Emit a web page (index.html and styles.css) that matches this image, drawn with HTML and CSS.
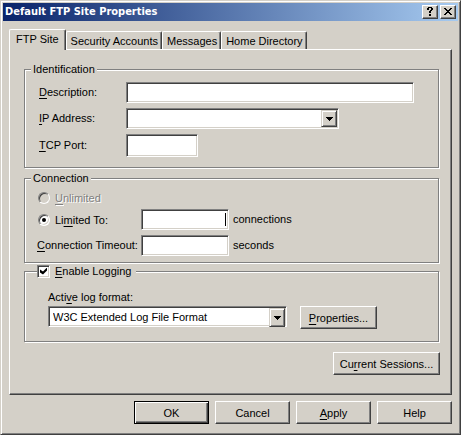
FILE: index.html
```html
<!DOCTYPE html>
<html lang="en">
<head>
<meta charset="utf-8">
<title>Default FTP Site Properties</title>
<link rel="stylesheet" href="styles.css">
</head>
<body>
<main class="window">
  <header class="titlebar">
    <h1 class="title">Default FTP Site Properties</h1>
    <button class="caption-button" type="button" aria-label="Help">
      <svg width="8" height="9" viewBox="0 0 8 9" shape-rendering="crispEdges" aria-hidden="true"><path d="M2 0h4v1H2zM1 1h2v2H1zM5 1h2v2H5zM4 3h2v1H4zM3 4h2v2H3zM3 7h2v2H3z"/></svg>
    </button>
    <button class="caption-button" type="button" aria-label="Close">
      <svg width="8" height="7" viewBox="0 0 8 7" shape-rendering="crispEdges" aria-hidden="true"><path d="M0 0h2v1H0zM6 0h2v1H6zM1 1h2v1H1zM5 1h2v1H5zM2 2h4v1H2zM3 3h2v1H3zM2 4h4v1H2zM1 5h2v1H1zM5 5h2v1H5zM0 6h2v1H0zM6 6h2v1H6z"/></svg>
    </button>
  </header>

  <form class="sheet">
    <div class="tabs" role="tablist">
      <button class="tab tab-active" type="button" role="tab" aria-selected="true">FTP Site</button>
      <button class="tab" type="button" role="tab">Security Accounts</button>
      <button class="tab" type="button" role="tab">Messages</button>
      <button class="tab" type="button" role="tab">Home Directory</button>
    </div>

    <section class="panel">
      <fieldset class="group identification">
        <legend class="caption">Identification</legend>
        <div class="id-rows">
          <label class="row-text" for="description"><u>D</u>escription:</label>
          <input class="field" id="description" type="text">
          <label class="row-text" for="ip"><u>I</u>P Address:</label>
          <span class="combo ip-combo">
            <select class="field" id="ip"><option></option></select>
            <span class="drop"><svg width="7" height="4" viewBox="0 0 7 4" shape-rendering="crispEdges" aria-hidden="true"><path d="M0 0h7v1H0zM1 1h5v1H1zM2 2h3v1H2zM3 3h1v1H3z"/></svg></span>
          </span>
          <label class="row-text" for="port"><u>T</u>CP Port:</label>
          <input class="field port" id="port" type="text">
        </div>
      </fieldset>

      <fieldset class="group connection">
        <legend class="caption">Connection</legend>
        <div class="limit-rows">
          <label class="choice choice-disabled"><input class="radio" type="radio" name="limit" disabled><span><u>U</u>nlimited</span></label>
          <label class="choice"><input class="radio" type="radio" name="limit" checked><span>Li<u>m</u>ited To:</span></label>
          <span class="field caret-field"><input class="bare" id="limit" type="text" aria-label="Maximum connections"><i class="caret"></i></span>
          <span class="row-text">connections</span>
          <label class="row-text" for="timeout"><u>C</u>onnection Timeout:</label>
          <input class="field" id="timeout" type="text">
          <span class="row-text">seconds</span>
        </div>
      </fieldset>

      <fieldset class="group logging">
        <legend class="check-caption">
          <label class="choice"><input class="checkbox" type="checkbox" checked><span><u>E</u>nable Logging</span></label>
        </legend>
        <div class="log-body">
          <label for="format">Acti<u>v</u>e log format:</label>
          <div class="log-row">
            <span class="combo log-combo">
              <select class="field" id="format"><option>W3C Extended Log File Format</option></select>
              <span class="drop"><svg width="7" height="4" viewBox="0 0 7 4" shape-rendering="crispEdges" aria-hidden="true"><path d="M0 0h7v1H0zM1 1h5v1H1zM2 2h3v1H2zM3 3h1v1H3z"/></svg></span>
            </span>
            <button class="button properties" type="button"><u>P</u>roperties...</button>
          </div>
        </div>
      </fieldset>

      <button class="button sessions" type="button">Cu<u>r</u>rent Sessions...</button>
    </section>

    <footer class="actions">
      <button class="button button-default" type="button">OK</button>
      <button class="button" type="button">Cancel</button>
      <button class="button" type="button"><u>A</u>pply</button>
      <button class="button" type="button">Help</button>
    </footer>
  </form>
</main>
</body>
</html>
```
FILE: styles.css
```css
:root {
  --face: #d4d0c8;
  --light: #ffffff;
  --shade: #808080;
  --dark: #404040;
}

* {
  box-sizing: border-box;
}

body {
  margin: 0;
  background: var(--face);
  color: #000;
  font: 11px/14px "Liberation Sans", Arial, sans-serif;
}

button,
input,
select {
  margin: 0;
  border-radius: 0;
  color: inherit;
  font: inherit;
}

u {
  text-underline-offset: 2px;
  text-decoration-thickness: 1px;
  text-decoration-skip-ink: none;
}

.window {
  display: flex;
  flex-direction: column;
  min-height: 100vh;
  padding: 2px;
  border: 1px solid var(--dark);
  border-top-color: var(--face);
  border-left-color: var(--face);
  box-shadow: inset 1px 1px var(--light), inset -1px -1px var(--shade);
}

.titlebar {
  display: flex;
  align-items: center;
  gap: 2px;
  height: 18px;
  padding: 0 2px;
  background: linear-gradient(to right, #0a246a, #a6caf0);
}

.title {
  flex: 1;
  margin: 0;
  color: #fff;
  font: bold 11px/14px "DejaVu Sans Condensed", "DejaVu Sans", sans-serif;
}

.caption-button {
  display: flex;
  align-items: center;
  justify-content: center;
  width: 16px;
  height: 14px;
  padding: 0 1px 1px 0;
  border: 1px solid var(--dark);
  border-top-color: var(--light);
  border-left-color: var(--light);
  background: var(--face);
  box-shadow: inset -1px -1px var(--shade);
}

.sheet {
  display: flex;
  flex: 1;
  flex-direction: column;
  padding: 8px 6px;
}

.tabs {
  display: flex;
  align-items: flex-end;
  height: 20px;
}

.tab {
  height: 18px;
  padding: 0 3px 0 4px;
  border: 1px solid var(--dark);
  border-width: 1px 1px 0;
  border-top-color: var(--light);
  border-left-color: var(--light);
  border-radius: 2px 2px 0 0;
  background: var(--face);
  box-shadow: inset -1px 0 var(--shade);
}

.tab-active {
  z-index: 1;
  height: 21px;
  margin-bottom: -1px;
  padding: 0 6px 2px;
}

.panel {
  display: flex;
  flex: 1;
  flex-direction: column;
  padding: 12px 11px 12px 14px;
  border: 1px solid var(--dark);
  border-top-color: var(--light);
  border-left-color: var(--light);
  box-shadow: inset -1px -1px var(--shade);
}

.group {
  min-width: 0;
  margin: 0 1px 0 0;
  padding: 0 12px;
  border: 1px solid var(--shade);
  box-shadow: 1px 1px var(--light), inset 1px 1px var(--light);
}

.caption {
  margin-left: -6px;
  padding: 0 2px;
  background: var(--face);
}

.identification {
  padding: 0 24px 10px 14px;
}

.identification .caption {
  margin-left: -8px;
}

.id-rows {
  display: grid;
  grid-template-columns: 87px 1fr;
  row-gap: 5px;
  align-items: center;
  padding-top: 6px;
}

.row-text {
  padding-bottom: 2px;
  white-space: nowrap;
}

.field {
  display: block;
  width: 100%;
  height: 21px;
  padding: 0 4px;
  border: 1px solid var(--light);
  border-top-color: var(--shade);
  border-left-color: var(--shade);
  outline: 0;
  background: #fff;
  box-shadow: inset 1px 1px var(--dark), inset -1px -1px var(--face);
  appearance: none;
}

.port {
  width: 72px;
  height: 23px;
}

.combo {
  position: relative;
  display: block;
}

.ip-combo {
  width: 213px;
}

.drop {
  position: absolute;
  top: 2px;
  right: 2px;
  bottom: 2px;
  display: flex;
  align-items: center;
  justify-content: center;
  width: 16px;
  border: 1px solid var(--dark);
  border-top-color: var(--face);
  border-left-color: var(--face);
  background: var(--face);
  box-shadow: inset 1px 1px var(--light), inset -1px -1px var(--shade);
  pointer-events: none;
}

.connection {
  margin-top: 3px;
  padding-bottom: 6px;
}

.limit-rows {
  display: grid;
  grid-template-columns: 100px 88px 1fr;
  grid-template-rows: 12px;
  gap: 5px 4px;
  align-items: center;
  padding-top: 7px;
}

.choice {
  display: flex;
  align-items: center;
  gap: 5px;
}

.choice-disabled {
  grid-column: 1 / -1;
  color: var(--shade);
  text-shadow: 1px 1px var(--light);
}

.radio {
  display: flex;
  align-items: center;
  justify-content: center;
  width: 12px;
  height: 12px;
  margin-left: 1px;
  border: 1px solid var(--light);
  border-top-color: var(--shade);
  border-left-color: var(--shade);
  border-radius: 50%;
  background: #fff;
  box-shadow: inset 1px 1px var(--dark), inset -1px -1px var(--face);
  appearance: none;
}

.radio:disabled {
  background: var(--face);
}

.radio:checked::before {
  width: 4px;
  height: 4px;
  border-radius: 50%;
  background: #000;
  content: "";
}

.caret-field {
  display: flex;
  align-items: center;
  padding: 0 2px 0 4px;
}

.bare {
  flex: 1;
  min-width: 0;
  padding: 0;
  border: 0;
  outline: 0;
  background: transparent;
}

.caret {
  width: 1px;
  height: 13px;
  background: #000;
}

.logging {
  margin-top: 1px;
  padding-bottom: 12px;
}

.check-caption {
  height: 14px;
  padding: 0 5px 0 0;
  background: var(--face);
}

.checkbox {
  display: flex;
  align-items: center;
  justify-content: center;
  width: 13px;
  height: 13px;
  border: 1px solid var(--light);
  border-top-color: var(--shade);
  border-left-color: var(--shade);
  background: #fff;
  box-shadow: inset 1px 1px var(--dark), inset -1px -1px var(--face);
  appearance: none;
}

.checkbox:checked::before {
  width: 7px;
  height: 7px;
  background: #000;
  clip-path: polygon(0 2px, 3px 4px, 7px 0, 7px 3px, 3px 7px, 0 5px);
  content: "";
}

.log-body {
  display: flex;
  flex-direction: column;
  gap: 2px;
  padding: 12px 0 0 11px;
}

.log-row {
  display: flex;
  gap: 13px;
}

.log-combo {
  width: 239px;
}

.button {
  width: 75px;
  height: 23px;
  padding: 0;
  border: 1px solid var(--dark);
  border-top-color: var(--light);
  border-left-color: var(--light);
  background: var(--face);
  box-shadow: inset -1px -1px var(--shade);
}

.button-default {
  border-color: #000;
  box-shadow: inset 1px 1px var(--light), inset -1px -1px var(--dark), inset -2px -2px var(--shade);
}

.properties {
  width: 77px;
}

.sessions {
  align-self: flex-end;
  width: 107px;
  margin-top: 10px;
}

.actions {
  display: flex;
  justify-content: flex-end;
  gap: 6px;
  padding-top: 6px;
}
```
